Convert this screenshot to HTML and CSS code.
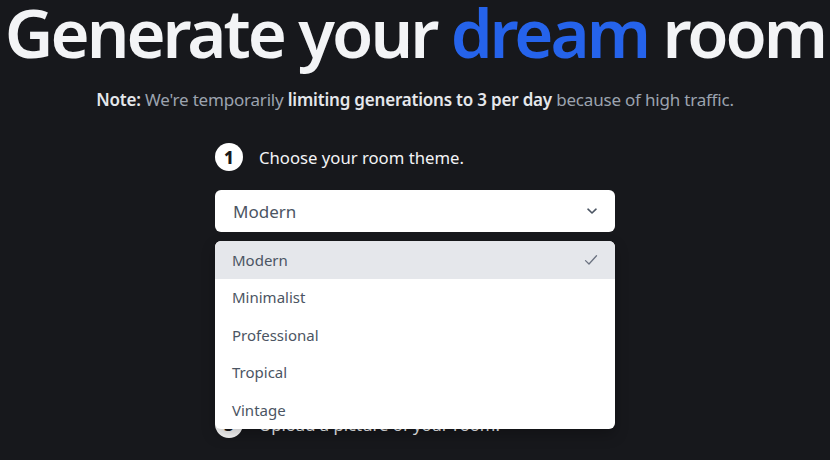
FILE: index.html
```html
<!DOCTYPE html>
<html lang="en">
<head>
<meta charset="utf-8">
<title>Generate your dream room</title>
<link rel="stylesheet" href="styles.css">
</head>
<body>
<main class="page">
  <h1 class="title">Generate your <span class="accent">dream</span> room</h1>
  <p class="note"><b>Note:</b> We're temporarily <b>limiting generations to 3 per day</b> because of high traffic.</p>

  <section class="steps">
    <div class="step">
      <div class="step-label"><span class="num">1</span><span>Choose your room theme.</span></div>
      <div class="select-wrap">
        <div class="select">
          <span>Modern</span>
          <svg class="chev" width="14" height="14" viewBox="0 0 14 14"><path d="M3 5.2 L7 9 L11 5.2" fill="none" stroke="#4b5563" stroke-width="1.6" stroke-linecap="round" stroke-linejoin="round"/></svg>
        </div>
        <ul class="menu">
          <li class="opt active"><span>Modern</span>
            <svg class="check" width="16" height="16" viewBox="0 0 16 16"><path d="M2.5 8.6 L6 12 L13.5 3.8" fill="none" stroke="#6b7280" stroke-width="1.3" stroke-linecap="round" stroke-linejoin="round"/></svg>
          </li>
          <li class="opt"><span>Minimalist</span></li>
          <li class="opt"><span>Professional</span></li>
          <li class="opt"><span>Tropical</span></li>
          <li class="opt"><span>Vintage</span></li>
        </ul>
      </div>
    </div>

    <div class="step">
      <div class="step-label"><span class="num">2</span><span>Choose your room type.</span></div>
      <div class="select-wrap">
        <div class="select">
          <span>Living Room</span>
        </div>
      </div>
    </div>

    <div class="step">
      <div class="step-label"><span class="num">3</span><span>Upload a picture of your room.</span></div>
    </div>
  </section>
</main>
</body>
</html>
```

FILE: styles.css
```css
* { box-sizing: border-box; }
html, body {
  margin: 0;
  padding: 0;
  background: #17181c;
  height: 100%;
  overflow: hidden;
}
body {
  font-family: "Noto Sans", "Open Sans", sans-serif;
  color: #f3f4f6;
}
.page {
  display: flex;
  flex-direction: column;
  align-items: center;
}
.title {
  margin: 0;
  font-size: 67px;
  font-weight: 600;
  line-height: 64px;
  letter-spacing: -3px;
  color: #f3f4f6;
  white-space: nowrap;
}
.accent { color: #2563eb; }
.note {
  margin: 24px 0 0 0;
  font-size: 17px;
  line-height: 24px;
  color: #9ca3af;
  letter-spacing: -0.2px;
}
.note b {
  color: #e5e7eb;
  font-weight: 600;
}
.steps {
  width: 400px;
  margin-top: 31px;
  display: flex;
  flex-direction: column;
  gap: 44.5px;
}
.step {
  display: flex;
  flex-direction: column;
  gap: 19px;
}
.step-label {
  display: flex;
  align-items: center;
  gap: 16px;
  font-size: 16.7px;
  color: #f3f4f6;
  height: 28px;
}
.num {
  width: 28px;
  height: 28px;
  border-radius: 50%;
  background: #ffffff;
  color: #17181c;
  font-weight: 800;
  font-size: 17px;
  display: flex;
  align-items: center;
  justify-content: center;
}
.select-wrap { position: relative; }
.select {
  height: 42px;
  background: #ffffff;
  border-radius: 6px;
  display: flex;
  align-items: center;
  justify-content: space-between;
  padding: 0 16px 0 18px;
  font-size: 17px;
  color: #4b5563;
}
.menu {
  position: absolute;
  left: 0;
  right: 0;
  top: 51px;
  margin: 0;
  padding: 0;
  list-style: none;
  background: #ffffff;
  border-radius: 6px;
  overflow: hidden;
  z-index: 5;
  box-shadow: 0 6px 14px rgba(0,0,0,0.25);
}
.opt {
  height: 37.5px;
  display: flex;
  align-items: center;
  justify-content: space-between;
  padding: 0 16px 0 17px;
  font-size: 15px;
  color: #4b5563;
}
.opt.active { background: #e5e7eb; }
```
